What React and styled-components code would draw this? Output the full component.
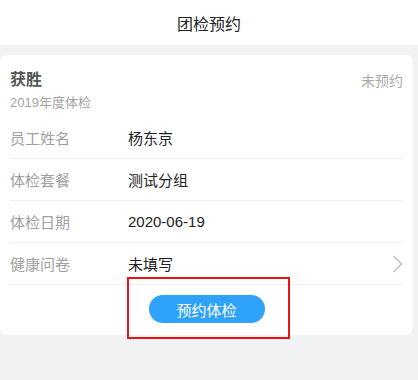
import React from "react";
import styled, { createGlobalStyle } from "styled-components";

const GlobalStyle = createGlobalStyle`
  html, body {
    margin: 0;
    padding: 0;
    background: #f1f2f4;
    font-family: "Liberation Sans", "Noto Sans CJK SC", sans-serif;
  }
`;

const Page = styled.div`
  width: 418px;
  height: 380px;
  background: #f1f2f4;
  overflow: hidden;
`;

const TopBar = styled.header`
  height: 45px;
  background: #fff;
  display: flex;
  align-items: center;
  justify-content: center;
  font-size: 16px;
  color: #222;
`;

const Card = styled.section`
  margin: 10px 5px 0 0;
  background: #fff;
  border-radius: 6px;
  padding: 14px 10px 12px;
`;

const Head = styled.div`
  display: flex;
  justify-content: space-between;
  align-items: flex-start;
  padding-bottom: 4px;
`;

const Name = styled.div`
  font-size: 16px;
  line-height: 22px;
  font-weight: 700;
  color: #555;
`;

const Sub = styled.div`
  margin-top: 2px;
  font-size: 13px;
  line-height: 20px;
  color: #a3a3a3;
`;

const Status = styled.div`
  font-size: 14px;
  line-height: 24px;
  color: #aaa;
`;

const Row = styled.div`
  display: flex;
  align-items: center;
  height: 41px;
  border-bottom: 1px solid #efefef;
  font-size: 15px;
`;

const Label = styled.span`
  width: 118px;
  color: #a0a0a0;
`;

const Value = styled.span`
  flex: 1;
  color: #222;
`;

const Chevron = styled.svg`
  width: 11px;
  height: 18px;
`;

const Footer = styled.div`
  display: flex;
  justify-content: center;
  padding-top: 10px;
`;

const Highlight = styled.div`
  position: relative;
  &::after {
    content: "";
    position: absolute;
    top: -18px;
    bottom: -16px;
    left: -22px;
    right: -25px;
    border: 2px solid #e8131b;
    pointer-events: none;
  }
`;

const Button = styled.button`
  width: 116px;
  height: 28px;
  border: 0;
  border-radius: 14px;
  background: #2ea3f9;
  color: #fff;
  font-family: inherit;
  font-size: 15px;
  padding: 0;
`;

const rows = [
  { label: "员工姓名", value: "杨东京" },
  { label: "体检套餐", value: "测试分组" },
  { label: "体检日期", value: "2020-06-19" },
  { label: "健康问卷", value: "未填写", link: true },
];

export default function App() {
  return (
    <Page>
      <GlobalStyle />
      <TopBar>团检预约</TopBar>
      <Card>
        <Head>
          <div>
            <Name>获胜</Name>
            <Sub>2019年度体检</Sub>
          </div>
          <Status>未预约</Status>
        </Head>
        {rows.map(r => (
          <Row key={r.label}>
            <Label>{r.label}</Label>
            <Value>{r.value}</Value>
            {r.link && (
              <Chevron viewBox="0 0 11 18">
                <path d="M1.5 1 L9.5 9 L1.5 17" fill="none" stroke="#c2c2c2" strokeWidth="1.7" />
              </Chevron>
            )}
          </Row>
        ))}
        <Footer>
          <Highlight>
            <Button>预约体检</Button>
          </Highlight>
        </Footer>
      </Card>
    </Page>
  );
}
